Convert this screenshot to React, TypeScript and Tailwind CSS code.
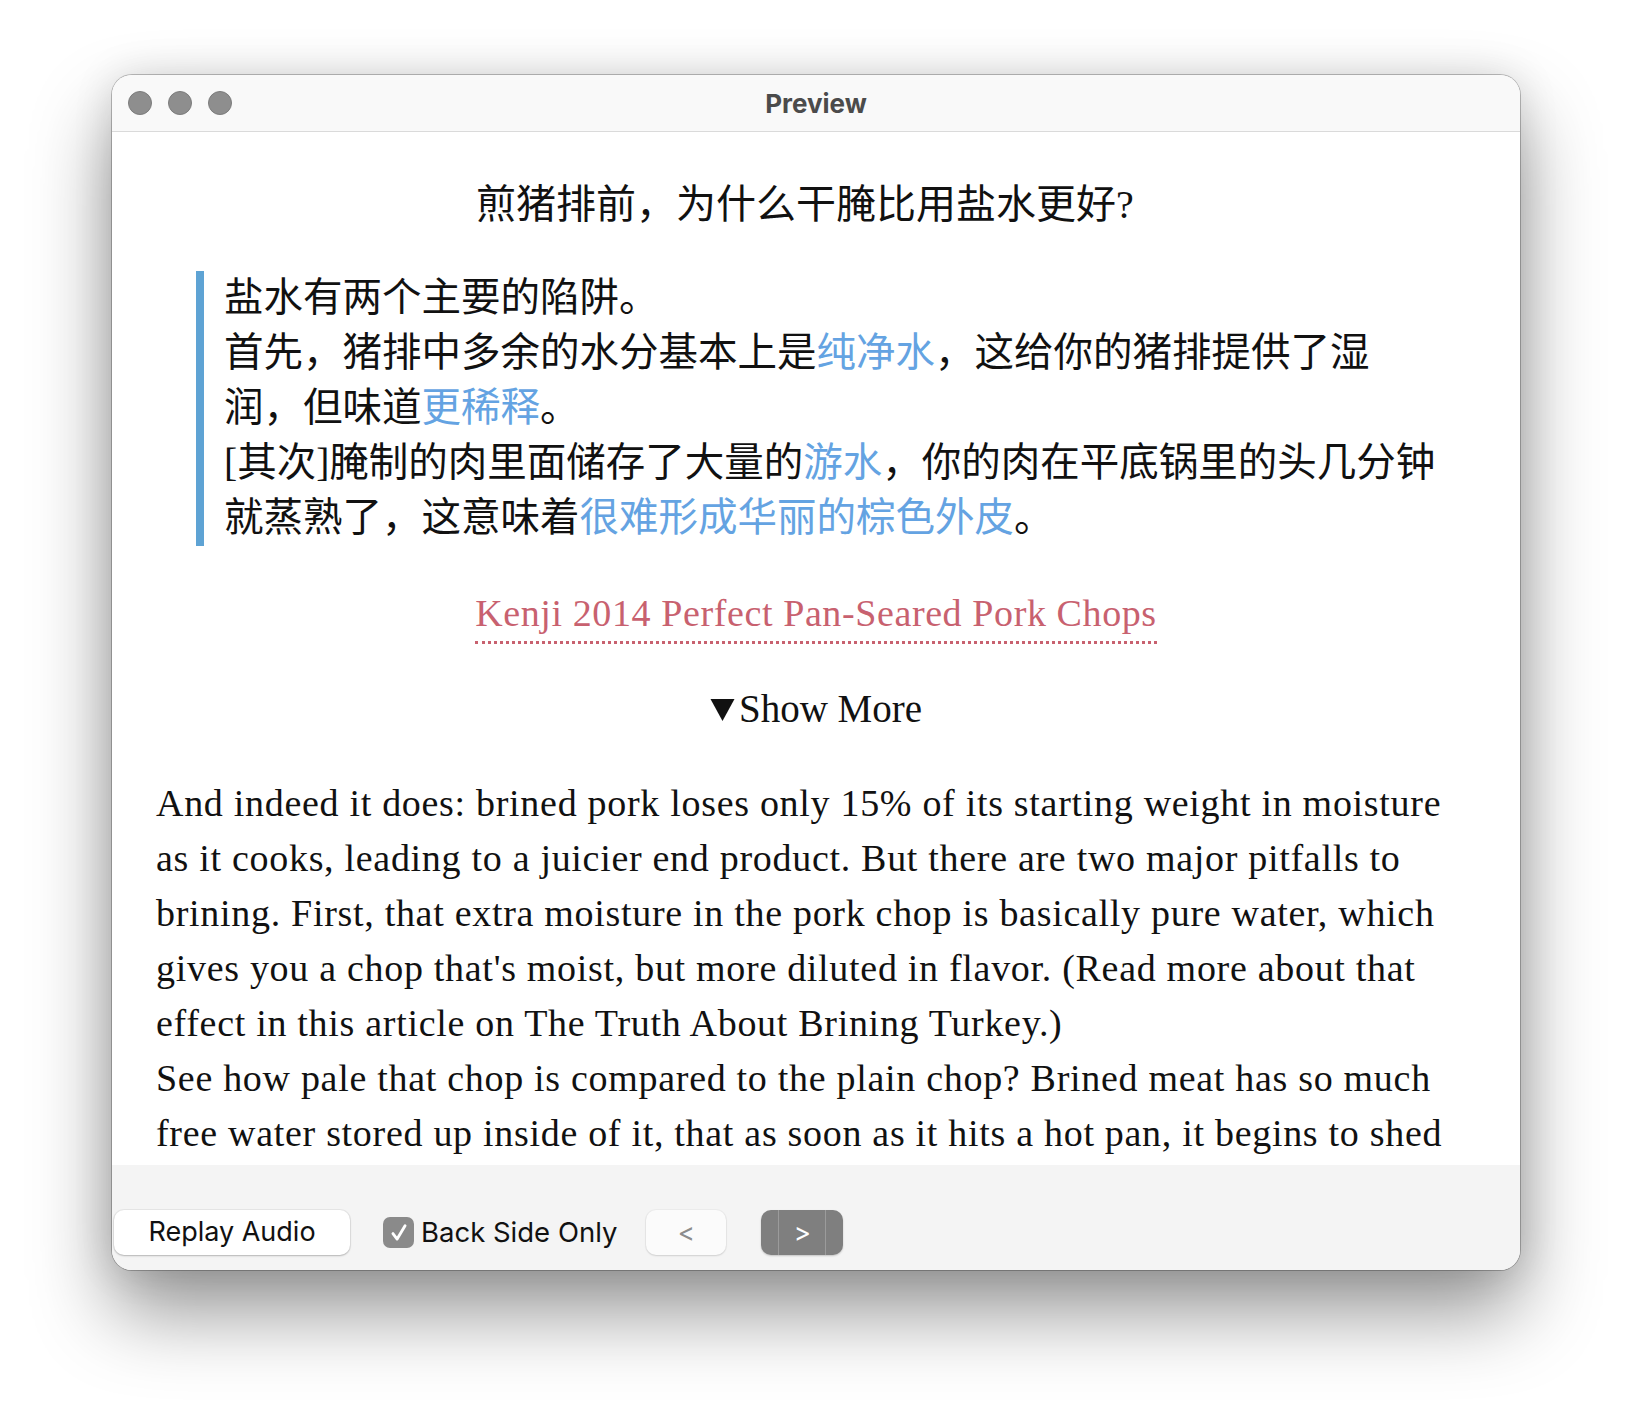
import React from 'react'

const serif = "font-['Liberation_Serif','Noto_Sans_CJK_SC',serif]"
const ui = "font-['Inter','Liberation_Sans',sans-serif]"

function TrafficLights() {
  return (
    <div className="flex gap-4 pl-4">
      {[0, 1, 2].map((i) => (
        <span
          key={i}
          className="block size-6 rounded-full border border-[#7c7c7c] bg-[#8e8e8e]"
        />
      ))}
    </div>
  )
}

function Blue({ children }: { children: React.ReactNode }) {
  return <span className="text-[#64a3e2]">{children}</span>
}

function Toolbar() {
  return (
    <div className={`flex h-[105px] shrink-0 items-start bg-[#f4f4f4] pt-[45px] pl-[2px] ${ui}`}>
      <button className="flex h-[45px] w-[236px] items-center justify-center rounded-[10px] bg-white text-[27px] text-[#111] shadow-[0_1px_2px_rgba(0,0,0,0.22),0_0_0_1px_rgba(0,0,0,0.05)]">
        Replay Audio
      </button>
      <label className="ml-[33px] flex h-[45px] items-center gap-[7px] text-[27.5px] text-[#111]">
        <span className="flex size-[31px] items-center justify-center rounded-[7px] bg-[#8a8a8a]">
          <svg viewBox="0 0 20 20" className="size-[22px]" fill="none">
            <path
              d="M4.5 10.5l3.8 5L15.5 3.5"
              stroke="white"
              strokeWidth="2.6"
              strokeLinecap="round"
              strokeLinejoin="round"
            />
          </svg>
        </span>
        Back Side Only
      </label>
      <button className="ml-[29px] flex h-[45px] w-[80px] items-center justify-center rounded-[10px] bg-[#fbfbfb] text-[26px] text-[#8c8c8c] shadow-[0_1px_2px_rgba(0,0,0,0.12),0_0_0_1px_rgba(0,0,0,0.03)]">
        &lt;
      </button>
      <button className="ml-[35px] flex h-[45px] w-[82px] items-stretch justify-center rounded-[10px] bg-[#7f7f7f] text-[26px] text-white shadow-[0_1px_2px_rgba(0,0,0,0.2)]">
        <span className="flex w-[48px] items-center justify-center border-x border-[#9b9b9b]">
          &gt;
        </span>
      </button>
    </div>
  )
}

export default function App() {
  return (
    <div className="min-h-[1418px] bg-white pt-[75px] pl-[112px]">
      <div className="flex h-[1195px] w-[1408px] flex-col overflow-hidden rounded-[20px] bg-white shadow-[0_0_0_1px_rgba(0,0,0,0.24),0_42px_80px_rgba(0,0,0,0.42),0_0_40px_rgba(0,0,0,0.12)]">
        {/* title bar */}
        <div className="relative flex h-[57px] shrink-0 items-center border-b border-[#dadada] bg-[#f9f9f9]">
          <TrafficLights />
          <div
            className={`absolute inset-x-0 top-0 flex h-full items-center justify-center text-[26px] font-bold text-[#4b4b4b] ${ui}`}
          >
            Preview
          </div>
        </div>

        {/* card content */}
        <div className={`min-h-0 flex-1 overflow-hidden px-[44px] pt-[45px] text-[#111] ${serif}`}>
          <h1 className="pr-[22px] text-center text-[40px] leading-[56px] font-normal">
            煎猪排前，为什么干腌比用盐水更好?
          </h1>

          <blockquote className="mt-[38px] ml-[40px] border-l-[8px] border-[#5ea3d4] pl-[20px] text-[39.5px] leading-[55px]">
            <p>盐水有两个主要的陷阱。</p>
            <p>
              首先，猪排中多余的水分基本上是<Blue>纯净水</Blue>，这给你的猪排提供了湿
              <br />
              润，但味道<Blue>更稀释</Blue>。
            </p>
            <p>
              [其次]腌制的肉里面储存了大量的<Blue>游水</Blue>，你的肉在平底锅里的头几分钟
              <br />
              就蒸熟了，这意味着<Blue>很难形成华丽的棕色外皮</Blue>。
            </p>
          </blockquote>

          <p className="mt-[45px] text-center">
            <a className="inline-block border-b-[3px] border-dotted border-[#c8616f] pb-[6px] text-[38px] leading-[44px] tracking-[0.6px] text-[#c8616f]">
              Kenji 2014 Perfect Pan-Seared Pork Chops
            </a>
          </p>

          <div className="mt-[40px] flex items-center justify-center gap-[4px] text-[39px] leading-[50px]">
            <svg viewBox="0 0 24 22" className="h-[22px] w-[25px] translate-y-[1px]">
              <path d="M0 0h24L12 22z" fill="#111" />
            </svg>
            <span>Show More</span>
          </div>

          <div className="mt-[42px] text-[38px] leading-[55px] tracking-[0.7px]">
            <p>
              And indeed it does: brined pork loses only 15% of its starting weight in moisture
              <br />
              as it cooks, leading to a juicier end product. But there are two major pitfalls to
              <br />
              brining. First, that extra moisture in the pork chop is basically pure water, which
              <br />
              gives you a chop that's moist, but more diluted in flavor. (Read more about that
              <br />
              effect in this article on The Truth About Brining Turkey.)
            </p>
            <p>
              See how pale that chop is compared to the plain chop? Brined meat has so much
              <br />
              free water stored up inside of it, that as soon as it hits a hot pan, it begins to shed
            </p>
          </div>
        </div>

        <Toolbar />
      </div>
    </div>
  )
}
